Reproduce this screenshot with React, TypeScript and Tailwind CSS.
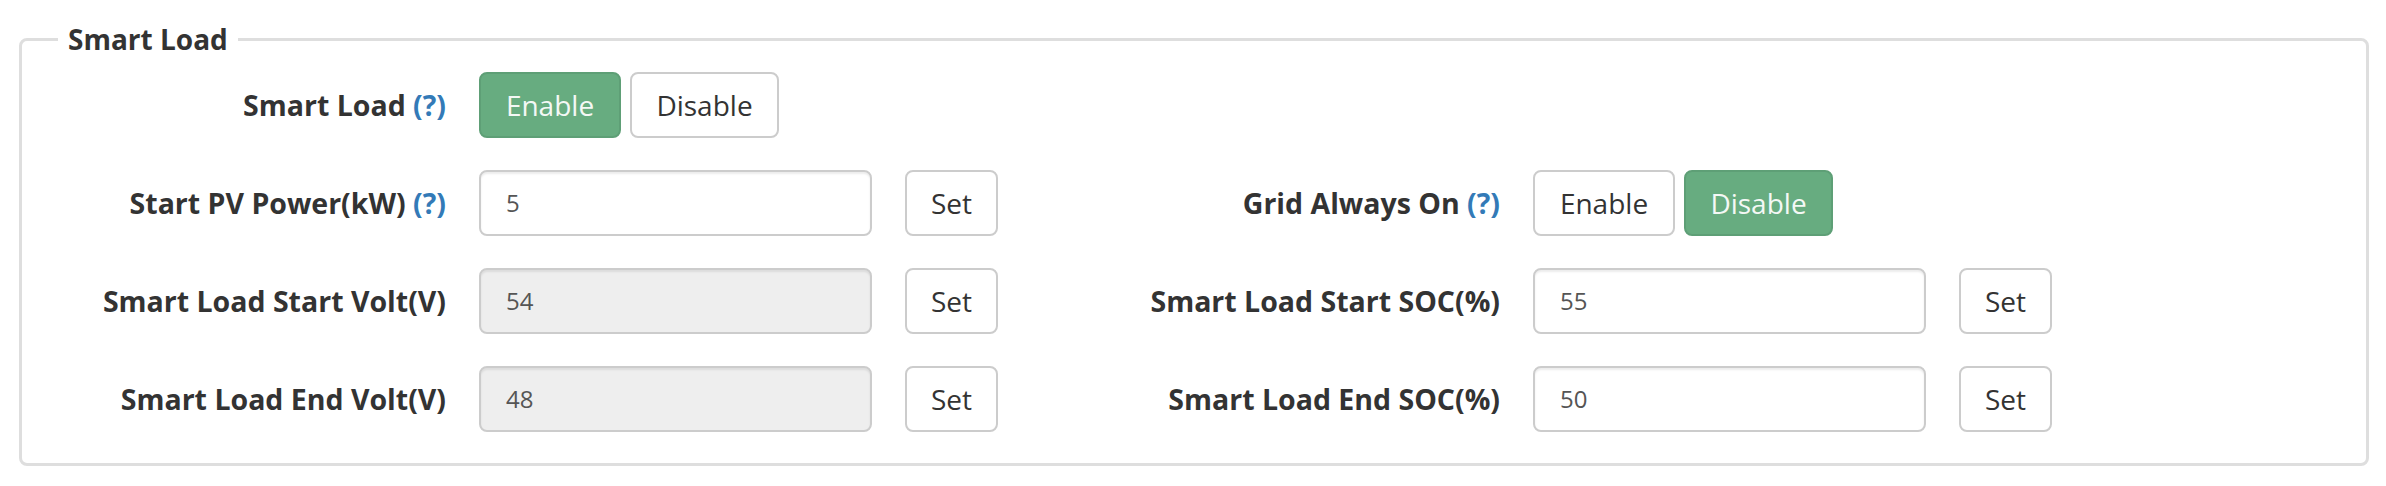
import React from "react";

const font = { fontFamily: '"Open Sans", "Noto Sans", sans-serif' };

function Help() {
  return <span className="text-[#337ab7]"> (?)</span>;
}

function Label({ text, help }: { text: string; help?: boolean }) {
  return (
    <div className="w-[424px] shrink-0 text-right text-[28.5px] font-bold text-[#333] leading-[66px] whitespace-nowrap">
      {text}
      {help && <Help />}
    </div>
  );
}

function Toggle({ on }: { on: "enable" | "disable" }) {
  const green = "bg-[#67ac80] border-[#5e9f76] text-[#f4f8f5]";
  const white = "bg-white border-[#cccccc] text-[#333]";
  return (
    <div className="ml-[33px] flex gap-[9px]">
      <button
        className={`h-[66px] w-[142px] rounded-[8px] border-2 text-[28px] ${on === "enable" ? green : white}`}
      >
        Enable
      </button>
      <button
        className={`h-[66px] w-[149px] rounded-[8px] border-2 text-[28px] ${on === "disable" ? green : white}`}
      >
        Disable
      </button>
    </div>
  );
}

function InputSet({ value, disabled }: { value: string; disabled?: boolean }) {
  return (
    <div className="ml-[33px] flex gap-[33px]">
      <div
        className={`h-[66px] w-[393px] rounded-[8px] border-2 border-[#cccccc] pl-[25px] flex items-center text-[24px] text-[#555] shadow-[inset_0_2px_2px_rgba(0,0,0,0.08)] ${disabled ? "bg-[#eeeeee]" : "bg-white"}`}
      >
        {value}
      </div>
      <button className="h-[66px] w-[93px] rounded-[8px] border-2 border-[#cccccc] bg-white text-[28px] text-[#333]">
        Set
      </button>
    </div>
  );
}

function Half({ children }: { children?: React.ReactNode }) {
  return <div className="w-[1054px] flex items-center">{children}</div>;
}

export default function App() {
  return (
    <div className="w-[2386px] h-[486px] bg-white pt-[22px] pl-[19px]" style={font}>
      <fieldset className="w-[2350px] rounded-[8px] border-[3px] border-[#dedede] pt-[16px] pb-[31px] m-0">
        <legend className="ml-[36px] px-[10px] text-[28px] font-bold text-[#333] leading-[34px]">
          Smart Load
        </legend>
        <div className="flex flex-col gap-[32px]">
          <div className="flex">
            <Half>
              <Label text="Smart Load" help />
              <Toggle on="enable" />
            </Half>
            <Half />
          </div>
          <div className="flex">
            <Half>
              <Label text="Start PV Power(kW)" help />
              <InputSet value="5" />
            </Half>
            <Half>
              <Label text="Grid Always On" help />
              <Toggle on="disable" />
            </Half>
          </div>
          <div className="flex">
            <Half>
              <Label text="Smart Load Start Volt(V)" />
              <InputSet value="54" disabled />
            </Half>
            <Half>
              <Label text="Smart Load Start SOC(%)" />
              <InputSet value="55" />
            </Half>
          </div>
          <div className="flex">
            <Half>
              <Label text="Smart Load End Volt(V)" />
              <InputSet value="48" disabled />
            </Half>
            <Half>
              <Label text="Smart Load End SOC(%)" />
              <InputSet value="50" />
            </Half>
          </div>
        </div>
      </fieldset>
    </div>
  );
}
